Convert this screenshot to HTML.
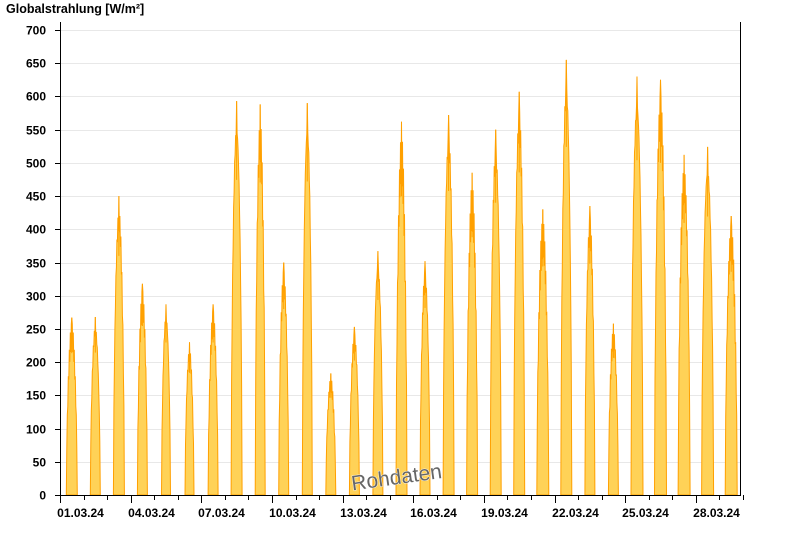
<!DOCTYPE html>
<html><head><meta charset="utf-8"><style>
body{margin:0;background:#fff;width:800px;height:550px;overflow:hidden;font-family:"Liberation Sans",Arial,sans-serif}
svg text{font-family:"Liberation Sans",Arial,sans-serif;font-weight:bold;font-size:12px;fill:#000}
</style></head><body>
<svg id="s" width="800" height="550" xmlns="http://www.w3.org/2000/svg">
<text x="6" y="13" style="font-size:12.5px">Globalstrahlung [W/m²]</text>
<g id="grid"></g>
<g id="data"></g>
<line x1="60.5" y1="22" x2="60.5" y2="495" stroke="#000"/>
<line x1="740.5" y1="22" x2="740.5" y2="495" stroke="#000"/>
<line x1="55" y1="495.5" x2="741" y2="495.5" stroke="#000"/>
<g id="ax"></g>
<text x="350" y="484" transform="rotate(-8 398 470)" style="font-size:21px;font-weight:normal;fill:#666;stroke:#fff;stroke-width:0.8;paint-order:stroke">Rohdaten</text>
</svg>
<script>
var NS="http://www.w3.org/2000/svg";
function el(p,t,a,txt){var e=document.createElementNS(NS,t);for(var k in a)e.setAttribute(k,a[k]);if(txt)e.textContent=txt;document.getElementById(p).appendChild(e);}
function Y(v){return 495-v*465/700;}
for(var v=0;v<=700;v+=50){var y=Math.round(Y(v))+0.5;
 if(v>0)el("grid","line",{x1:61,x2:740,y1:y,y2:y,stroke:"#e8e8e8"});
 el("ax","line",{x1:55,x2:60,y1:y,y2:y,stroke:"#000"});
 el("ax","text",{x:46,y:y+4,"text-anchor":"end"},String(v));}
var D=23.55;
for(var d=0;d<=29;d++){var x=Math.round(60+D*d)+0.5;var maj=d%3==0;
 el("ax","line",{x1:x,x2:x,y1:495,y2:maj?503:500,stroke:"#000"});
 if(maj&&d<28){var dd=d+1;el("ax","text",{x:x+20,y:517,"text-anchor":"middle"},(dd<10?"0":"")+dd+".03.24");}}
var P=[267,268,450,318,287,230,287,593,588,350,590,183,253,367,562,352,572,485,550,607,430,655,435,258,630,625,512,524,420];
var W=[5.5,5,5.5,5,4.5,4.5,5,5.5,5,5,5,5,5,5,5.5,5,5.5,5.5,5.5,5.5,6,5.5,5,5,6,6,6,6,6];
for(var i=0;i<P.length;i++){var c=60+D*(i+0.5),w=W[i],pts=[];
 pts.push([c-w-0.5,495]);
 for(var k=-w;k<=w;k+=0.5){var t=k/w;var f=Math.pow(Math.cos(t*Math.PI/2),0.6);
  var n=0.82+0.15*Math.abs(Math.sin(i*7.3+k*3.1));
  if(Math.abs(k)<0.3)n=1;
  pts.push([c+k,Y(P[i]*f*n)]);}
 pts.push([c+w+0.5,495]);
 el("data","polygon",{points:pts.map(function(p){return p[0].toFixed(1)+","+p[1].toFixed(1)}).join(" "),fill:"#ffd257",stroke:"#ffa000","stroke-width":"1"});
 el("data","line",{x1:c,x2:c,y1:Y(P[i]),y2:Y(P[i]*0.8),stroke:"#ffa000","stroke-width":"1"});}
</script>
</body></html>
